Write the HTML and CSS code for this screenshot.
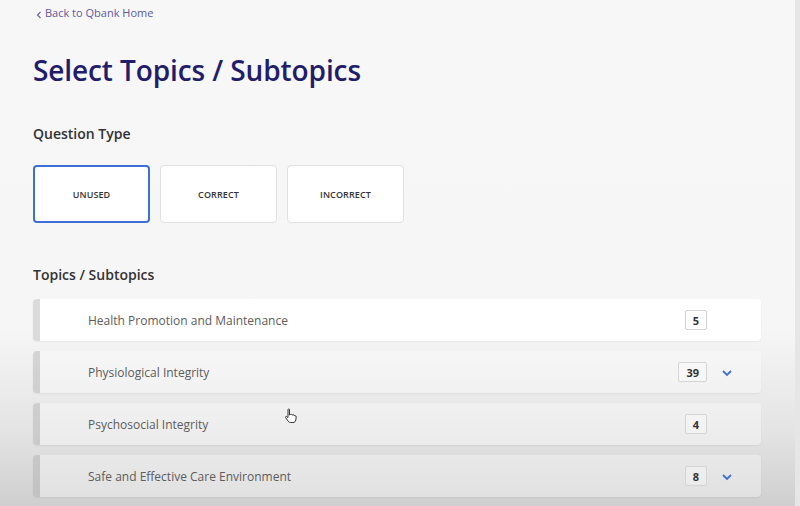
FILE: index.html
```html
<!DOCTYPE html>
<html lang="en">
<head>
<meta charset="utf-8">
<title>Select Topics / Subtopics</title>
<link rel="stylesheet" href="styles.css">
</head>
<body>
<div class="page">
  <a class="back" href="#"><svg class="back-icon" width="6" height="8" viewBox="0 0 6 8"><path d="M4.5 1 L1.5 4 L4.5 7" fill="none" stroke="#6a6a8a" stroke-width="1.2"/></svg>Back to Qbank Home</a>
  <h1 class="title">Select Topics / Subtopics</h1>

  <h2 class="section">Question Type</h2>
  <div class="types">
    <button class="type selected">UNUSED</button>
    <button class="type">CORRECT</button>
    <button class="type">INCORRECT</button>
  </div>

  <h2 class="section topics-head">Topics / Subtopics</h2>
  <div class="list">
    <div class="row first">
      <span class="name">Health Promotion and Maintenance</span>
      <span class="count">5</span>
      <span class="caret"></span>
    </div>
    <div class="row">
      <span class="name">Physiological Integrity</span>
      <span class="count">39</span>
      <span class="caret"><svg width="12" height="8" viewBox="0 0 12 8"><path d="M2 2 L6 6 L10 2" fill="none" stroke="#3d6fd6" stroke-width="1.8"/></svg></span>
    </div>
    <div class="row">
      <span class="name">Psychosocial Integrity</span>
      <span class="count">4</span>
      <span class="caret"></span>
    </div>
    <div class="row">
      <span class="name">Safe and Effective Care Environment</span>
      <span class="count">8</span>
      <span class="caret"><svg width="12" height="8" viewBox="0 0 12 8"><path d="M2 2 L6 6 L10 2" fill="none" stroke="#3d6fd6" stroke-width="1.8"/></svg></span>
    </div>
  </div>
</div>
<svg class="cursor" width="14" height="16" viewBox="0 0 14 16"><path d="M4 1.5 C4 0.8 5.5 0.8 5.5 1.5 L5.5 7 L6.5 6.5 C7 6 8 6.3 8 7 L9 6.8 C9.6 6.6 10.3 7 10.3 7.6 L11 7.6 C11.7 7.6 12.3 8.2 12.2 9 L11.8 12 C11.6 13.6 10.4 14.5 9 14.5 L6.5 14.5 C5.5 14.5 4.8 14 4.2 13.2 L1.6 9.6 C1.1 8.9 2 8 2.8 8.6 L4 9.6 Z" fill="#fff" stroke="#333" stroke-width="1"/></svg>
</body>
</html>
```
FILE: styles.css
```css
html, body {
  margin: 0;
  padding: 0;
}
body {
  width: 800px;
  height: 506px;
  overflow: hidden;
  position: relative;
  font-family: "Open Sans", "Noto Sans", sans-serif;
  background: linear-gradient(to bottom, #f7f7f8 0px, #f6f6f7 330px, #e4e4e4 430px, #cfcfcf 506px);
  box-shadow: inset -5px 0 0 #e6e6e6;
}
.page {
  padding: 0 39px 0 33px;
}
.back {
  display: flex;
  align-items: center;
  gap: 3px;
  padding-top: 4px;
  margin-left: 3px;
  font-size: 11px;
  color: #5d5a9c;
  text-decoration: none;
  height: 16px;
}
.back-icon {
  margin-top: 5px;
}
.title {
  margin: 31px 0 0;
  font-size: 28px;
  font-weight: 600;
  color: #221c6b;
  line-height: 38px;
  letter-spacing: -0.1px;
}
.section {
  margin: 35px 0 0;
  font-size: 14px;
  font-weight: 600;
  color: #333;
  line-height: 20px;
}
.types {
  display: flex;
  gap: 10px;
  margin-top: 21px;
}
.type {
  width: 117px;
  height: 58px;
  background: #fff;
  border: 1px solid #e0e0e0;
  border-radius: 4px;
  font-family: "Open Sans", "Noto Sans", sans-serif;
  font-size: 9px;
  font-weight: 600;
  color: #333;
  letter-spacing: 0.1px;
  padding: 0;
}
.type.selected {
  border: 2px solid #3d6fd6;
}
.topics-head {
  margin-top: 42px;
}
.list {
  display: flex;
  flex-direction: column;
  gap: 10px;
  margin-top: 14px;
}
.row {
  display: flex;
  align-items: center;
  height: 42px;
  border-left: 7px solid rgba(0, 0, 0, 0.14);
  border-radius: 4px;
  background: rgba(255, 255, 255, 0.35);
  box-shadow: 0 1px 2px rgba(0, 0, 0, 0.06);
}
.row.first {
  background: #fff;
}
.name {
  flex: 1;
  padding-left: 48px;
  padding-top: 1px;
  font-size: 12px;
  color: #5c5c5c;
}
.count {
  height: 20px;
  padding: 0 7px;
  border: 1px solid #d4d4d4;
  border-radius: 2px;
  box-sizing: border-box;
  font-size: 11px;
  font-weight: 700;
  color: #333;
  display: flex;
  align-items: center;
  justify-content: center;
  background: rgba(255, 255, 255, 0.3);
}
.caret {
  width: 40px;
  padding-left: 14px;
  display: flex;
  align-items: center;
  padding-top: 1px;
}
.cursor {
  position: absolute;
  left: 284px;
  top: 408px;
}
```
